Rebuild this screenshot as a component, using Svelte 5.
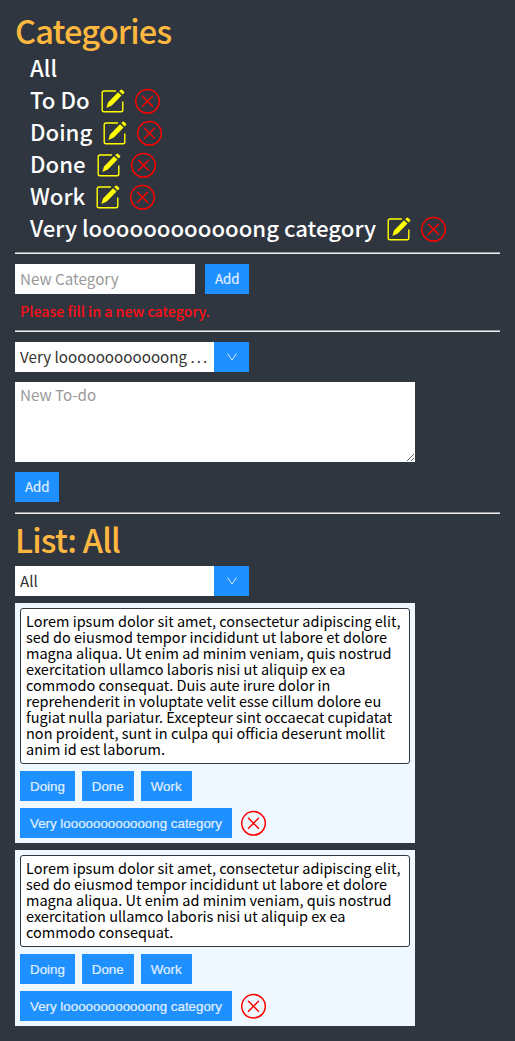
<script>
  const long = 'Very l' + 'o'.repeat(12) + 'ng category';
  const categories = ['All', 'To Do', 'Doing', 'Done', 'Work', long];
  const intro = 'Lorem ipsum dolor sit amet, consectetur adipiscing elit, sed do eiusmod tempor incididunt ut labore et dolore magna aliqua. Ut enim ad minim veniam, quis nostrud exercitation ullamco laboris nisi ut aliquip ex ea commodo consequat.';
  const todos = [
    intro + ' Duis aute irure dolor in reprehenderit in voluptate velit esse cillum dolore eu fugiat nulla pariatur. Excepteur sint occaecat cupidatat non proident, sunt in culpa qui officia deserunt mollit anim id est laborum.',
    intro
  ];
  const targets = ['Doing', 'Done', 'Work', long];
  const shorten = (s) => (s.length > 24 ? s.slice(0, s.lastIndexOf(' ')) : s);
</script>

{#snippet remove()}
  <svg class="remove" viewBox="0 0 26 26" width="26" height="26" fill="none" stroke="red" stroke-width="1.5" stroke-linecap="round">
    <circle cx="12.5" cy="13.3" r="11.8" />
    <path d="M7.5 8.3l10 10M17.5 8.3l-10 10" />
  </svg>
{/snippet}

{#snippet picker(value)}
  <div class="select">
    <span>{shorten(value)}{#if shorten(value) !== value}{' '}<b>...</b>{/if}</span>
    <i><svg viewBox="0 0 12 8" width="12" height="8" fill="none" stroke="#d5e9ff" stroke-width="1"><path d="M1.5 .5l4.5 6.5 4.5-6.5" /></svg></i>
  </div>
{/snippet}

<main>
  <h1>Categories</h1>
  <ul>
    {#each categories as name, i}
      <li>
        <span>{name}</span>
        {#if i > 0}
          <svg class="edit" viewBox="0 0 26 26" width="26" height="26">
            <path d="M15.5 3H4Q2.2 3 2.2 4.8V22Q2.2 23.8 4 23.8H21Q22.8 23.8 22.8 22V14" fill="none" stroke="yellow" stroke-width="1.4" stroke-linecap="round" />
            <path d="M18 4.2L21.5 7.6 11.8 17.6 6.4 20 8 14.4ZM19.2 3.1L20.8 1.7Q21.4 1.1 22 1.7L24.1 3.8Q24.7 4.4 24.1 5L22.6 6.4Z" fill="yellow" />
          </svg>
          {@render remove()}
        {/if}
      </li>
    {/each}
  </ul>
  <hr />
  <div class="form">
    <input placeholder="New Category" />
    <button>Add</button>
  </div>
  <p class="error">Please fill in a new category.</p>
  <hr />
  <div class="compose">
    {@render picker(long)}
    <textarea placeholder="New To-do"></textarea>
    <button>Add</button>
  </div>
  <hr />
  <h1 class="list-title">List: All</h1>
  {@render picker('All')}
  {#each todos as text}
    <article>
      <p>{text}</p>
      <div class="actions">
        {#each targets as target}<button>{target}</button>{/each}
        {@render remove()}
      </div>
    </article>
  {/each}
</main>

<style>
  :global(body) { background: #2f3640; }
  main {
    box-sizing: border-box;
    min-height: 1041px;
    padding: 9px 15px 15px;
    font-family: "Noto Sans CJK KR", sans-serif;
    font-size: 15.2px;
    color: #fff;
  }
  h1 { margin: 0; height: 44px; font-size: 32.6px; line-height: 41px; font-weight: 500; letter-spacing: -0.85px; color: #ffb83f; }
  ul { margin: 0; padding: 0 0 0 15px; list-style: none; }
  li { display: flex; align-items: center; height: 32px; font-size: 22.2px; line-height: 28px; font-weight: 500; white-space: nowrap; }
  li span { height: 32px; }
  .edit { margin-left: 10px; }
  li .remove { margin-left: 9px; }
  hr { box-sizing: border-box; height: 2px; margin: 7px 0 10px; border: 0; border-top: 1px solid #9a9a9a; border-bottom: 1px solid #eee; }
  .form { display: flex; gap: 10px; height: 30px; }
  input, textarea {
    box-sizing: border-box;
    margin: 0;
    padding: 0 5px;
    border: 0;
    border-radius: 0;
    outline: 0;
    background: #fff;
    font: 400 15.2px "Noto Sans CJK KR", sans-serif;
  }
  input { width: 180px; height: 30px; padding-bottom: 3px; }
  textarea { display: block; width: 400px; height: 80px; padding-top: 1px; }
  ::placeholder { color: #999; opacity: 1; }
  button {
    height: 30px;
    margin: 0;
    padding: 0 10px;
    border: 0;
    background: dodgerblue;
    color: #e0efff;
    font: 400 13.333px "Noto Sans CJK KR", sans-serif;
    white-space: nowrap;
  }
  .form button, .compose button { width: 44px; padding-bottom: 1px; -webkit-text-stroke: 0.2px #e0efff; }
  .error { margin: 6px 0 0 5px; height: 23px; line-height: 22px; font-size: 14.2px; font-weight: 500; color: #ff0d17; }
  .select { display: flex; width: 234px; height: 30px; background: #fff; color: #333; line-height: 28px; }
  .select span { flex: 1; padding: 0 0 0 5px; overflow: hidden; white-space: nowrap; }
  .select b { font-weight: 400; letter-spacing: 2px; }
  .select i { display: flex; align-items: center; justify-content: center; width: 35px; background: dodgerblue; }
  .compose { display: flex; flex-direction: column; align-items: flex-start; gap: 10px; }
  .compose + hr { margin: 10px 0 4px; }
  .list-title { height: 48px; }
  article { box-sizing: border-box; width: 400px; margin-top: 7px; padding: 5px; background: aliceblue; }
  article p { margin: 0; padding: 4px 5px 6px; border: 1px solid #2f3640; border-radius: 3px; background: #fff; color: #000; font-size: 14.5px; line-height: 16px; }
  .actions { display: flex; flex-wrap: wrap; gap: 7px; margin-top: 7px; align-items: center; }
  .actions button { font-family: "Liberation Sans", Arial, sans-serif; -webkit-text-stroke: 0.2px #e0efff; }
  .actions .remove { margin-left: 2px; }
</style>
